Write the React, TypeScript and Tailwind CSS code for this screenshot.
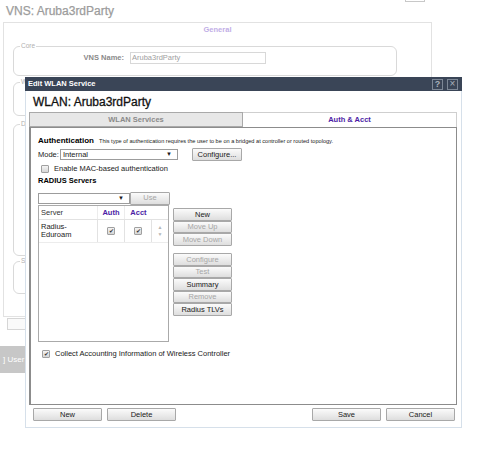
import React from "react";

const FONT = { fontFamily: '"Liberation Sans", Arial, sans-serif' };

function Btn({
  children,
  disabled,
  className = "",
}: {
  children: React.ReactNode;
  disabled?: boolean;
  className?: string;
}) {
  return (
    <div
      className={
        "flex items-center justify-center border border-[#a8a8a8] rounded-[1px] bg-gradient-to-b from-[#fbfbfb] to-[#dedede] text-[7.5px] leading-none " +
        (disabled ? "text-[#a6a6a6] " : "text-[#1a1a1a] ") +
        className
      }
    >
      {children}
    </div>
  );
}

function Check({ checked }: { checked?: boolean }) {
  return (
    <span className="flex h-[8px] w-[8px] shrink-0 items-center justify-center rounded-[1px] border border-[#a0a0a0] bg-gradient-to-b from-[#f4f4f4] to-[#d6d6d6] text-[6px] leading-none text-[#333]">
      {checked ? "✔" : ""}
    </span>
  );
}

function Fieldset({
  legend,
  className = "",
  children,
}: {
  legend: string;
  className?: string;
  children?: React.ReactNode;
}) {
  return (
    <fieldset className={"rounded-[6px] border border-[#d9d9d9] " + className}>
      <legend className="ml-[6px] px-[1px] text-[6.5px] leading-none text-[#b0b0b0]">{legend}</legend>
      {children}
    </fieldset>
  );
}

export default function App() {
  return (
    <div className="relative h-[465px] w-[490px] overflow-hidden bg-white" style={FONT}>
      {/* background page */}
      <div className="ml-[405px] h-[2px] w-[20px] border-x border-b border-[#c8c8c8]" />
      <div className="ml-[6px] mt-[1px] h-[16px] text-[12px] leading-[16px] text-[#9c9c9c] [-webkit-text-stroke:0.25px_#9c9c9c]">
        VNS: Aruba3rdParty
      </div>
      <div className="ml-[3px] mt-[3px] flex h-[295px] w-[429px] flex-col border border-[#e2e2e2]">
        <div className="h-[12px] pt-[2px] text-center text-[7.5px] font-bold leading-[10px] text-[#c1aee6]">General</div>
        <div className="mt-[8px] flex flex-col pl-[9px] pr-[34px]">
          <Fieldset legend="Core" className="h-[33px] pt-[2px]">
            <div className="flex items-center">
              <div className="w-[110px] text-right text-[7.5px] font-bold text-[#8a8a8a]">VNS Name:</div>
              <div className="ml-[6px] flex h-[12px] w-[136px] items-center border border-[#d8d8d8] px-[1px] text-[7.5px] text-[#a0a0a0]">
                Aruba3rdParty
              </div>
            </div>
          </Fieldset>
          <Fieldset legend="W" className="mt-[3px] h-[37px]" />
          <Fieldset legend="D" className="mt-[5px] h-[135px]" />
          <Fieldset legend="S" className="mt-[2px] h-[36px]" />
        </div>
      </div>
      <div className="ml-[7px] mt-[1px] h-[12px] w-[80px] border border-[#d6d6d6] bg-[#fafafa]" />
      <div className="mt-[16px] flex h-[27px] w-[200px] items-center bg-[#c7c7c7] pl-[3px] text-[8px] text-white">
        ] User
      </div>

      {/* dialog window */}
      <div className="absolute left-[25px] top-[77px] flex h-[351px] w-[437px] flex-col">
        <div className="flex h-[14px] items-center justify-between bg-[#3a4557] pl-[3px] pr-[4px]">
          <span className="text-[7.5px] font-bold text-white">Edit WLAN Service</span>
          <div className="flex gap-[4px]">
            <span className="flex h-[11px] w-[11px] items-center justify-center border border-[#7d8796] text-[9px] font-bold leading-none text-[#a9b0bb]">
              ?
            </span>
            <span className="flex h-[11px] w-[11px] items-center justify-center border border-[#7d8796] text-[10px] leading-none text-[#a9b0bb]">
              ×
            </span>
          </div>
        </div>
        <div className="flex flex-1 flex-col border-x border-b border-[#d6e0ea] bg-white pl-[3px] pr-[4px]">
          <div className="h-[21px] pl-[4px] pt-[4px] text-[12px] leading-[15px] text-[#111] [-webkit-text-stroke:0.3px_#111]">
            WLAN: Aruba3rdParty
          </div>
          <div className="flex h-[15px]">
            <div className="flex w-[214px] items-center justify-center border border-[#a9a9a9] bg-[#e7e7e7] text-[7.5px] font-bold text-[#8a8a8a]">
              WLAN Services
            </div>
            <div className="flex flex-1 items-center justify-center border-r border-t border-[#cfcfcf] text-[7.5px] font-bold text-[#4b1ca5]">
              Auth &amp; Acct
            </div>
          </div>
          <div className="flex h-[278px] flex-col border border-l-2 border-[#8c8c8c] pl-[7px] pt-[9px] text-[7.5px] text-[#1a1a1a]">
            <div className="flex h-[8px] items-center">
              <span className="text-[8px] font-bold text-black">Authentication</span>
              <span className="ml-[5px] text-[5.6px] text-[#222]">
                This type of authentication requires the user to be on a bridged at controller or routed topology.
              </span>
            </div>
            <div className="mt-[3px] flex h-[13px] items-center">
              <span className="w-[22px]">Mode:</span>
              <div className="flex h-[11px] w-[118px] items-center justify-between border border-[#9c9c9c] pl-[2px] pr-[5px]">
                <span>Internal</span>
                <span className="text-[6px]">▼</span>
              </div>
              <Btn className="ml-[14px] h-[13px] w-[50px]">Configure...</Btn>
            </div>
            <div className="mt-[3px] flex h-[9px] items-center pl-[3px]">
              <Check />
              <span className="ml-[5px]">Enable MAC-based authentication</span>
            </div>
            <div className="mt-[4px] h-[8px] text-[7.5px] font-bold leading-[8px] text-black">RADIUS Servers</div>
            <div className="mt-[6px] flex h-[14px] items-center">
              <div className="flex h-[11px] w-[92px] items-center justify-end border border-[#9c9c9c] pr-[5px] text-[6px]">▼</div>
              <Btn disabled className="h-[13px] w-[40px]">
                Use
              </Btn>
            </div>
            <div className="flex">
              <div className="flex h-[137px] w-[131px] flex-col border border-[#aaaaaa]">
                <div className="flex h-[14px] border-b border-[#e2e2e2]">
                  <div className="flex w-[59px] items-center border-r border-[#ececec] pl-[2px] text-[#333]">Server</div>
                  <div className="flex w-[27px] items-center justify-center border-r border-[#ececec] font-bold text-[#4b1ca5]">Auth</div>
                  <div className="flex w-[27px] items-center justify-center font-bold text-[#4b1ca5]">Acct</div>
                </div>
                <div className="flex h-[23px] border-b border-[#ececec]">
                  <div className="flex w-[59px] flex-col justify-center border-r border-[#e2e2e2] pl-[2px] leading-[8px] text-[#222]">
                    <span>Radius-</span>
                    <span>Eduroam</span>
                  </div>
                  <div className="flex w-[27px] items-center justify-center border-r border-[#e2e2e2]">
                    <Check checked />
                  </div>
                  <div className="flex w-[27px] items-center justify-center border-r border-[#e2e2e2]">
                    <Check checked />
                  </div>
                  <div className="flex flex-1 flex-col items-center justify-center gap-[2px] text-[5px] leading-none text-[#b5b5b5]">
                    <span>▲</span>
                    <span>▼</span>
                  </div>
                </div>
              </div>
              <div className="ml-[4px] mt-[3px] flex w-[59px] flex-col">
                <Btn className="h-[12.5px]">New</Btn>
                <Btn disabled className="h-[12.5px]">
                  Move Up
                </Btn>
                <Btn disabled className="h-[12.5px]">
                  Move Down
                </Btn>
                <div className="h-[7.5px]" />
                <Btn disabled className="h-[12.5px]">
                  Configure
                </Btn>
                <Btn disabled className="h-[12.5px]">
                  Test
                </Btn>
                <Btn className="h-[12.5px]">Summary</Btn>
                <Btn disabled className="h-[12.5px]">
                  Remove
                </Btn>
                <Btn className="h-[12.5px]">Radius TLVs</Btn>
              </div>
            </div>
            <div className="mt-[7px] flex h-[9px] items-center pl-[4px]">
              <Check checked />
              <span className="ml-[5px] text-[#1a1a1a]">Collect Accounting Information of Wireless Controller</span>
            </div>
          </div>
          <div className="mt-[2px] flex h-[15px] items-center pl-[4px] pr-[2px]">
            <Btn className="h-[13px] w-[69px]">New</Btn>
            <Btn className="ml-[5px] h-[13px] w-[69px]">Delete</Btn>
            <div className="flex-1" />
            <Btn className="h-[13px] w-[69px]">Save</Btn>
            <Btn className="ml-[5px] h-[13px] w-[69px]">Cancel</Btn>
          </div>
        </div>
      </div>
    </div>
  );
}
